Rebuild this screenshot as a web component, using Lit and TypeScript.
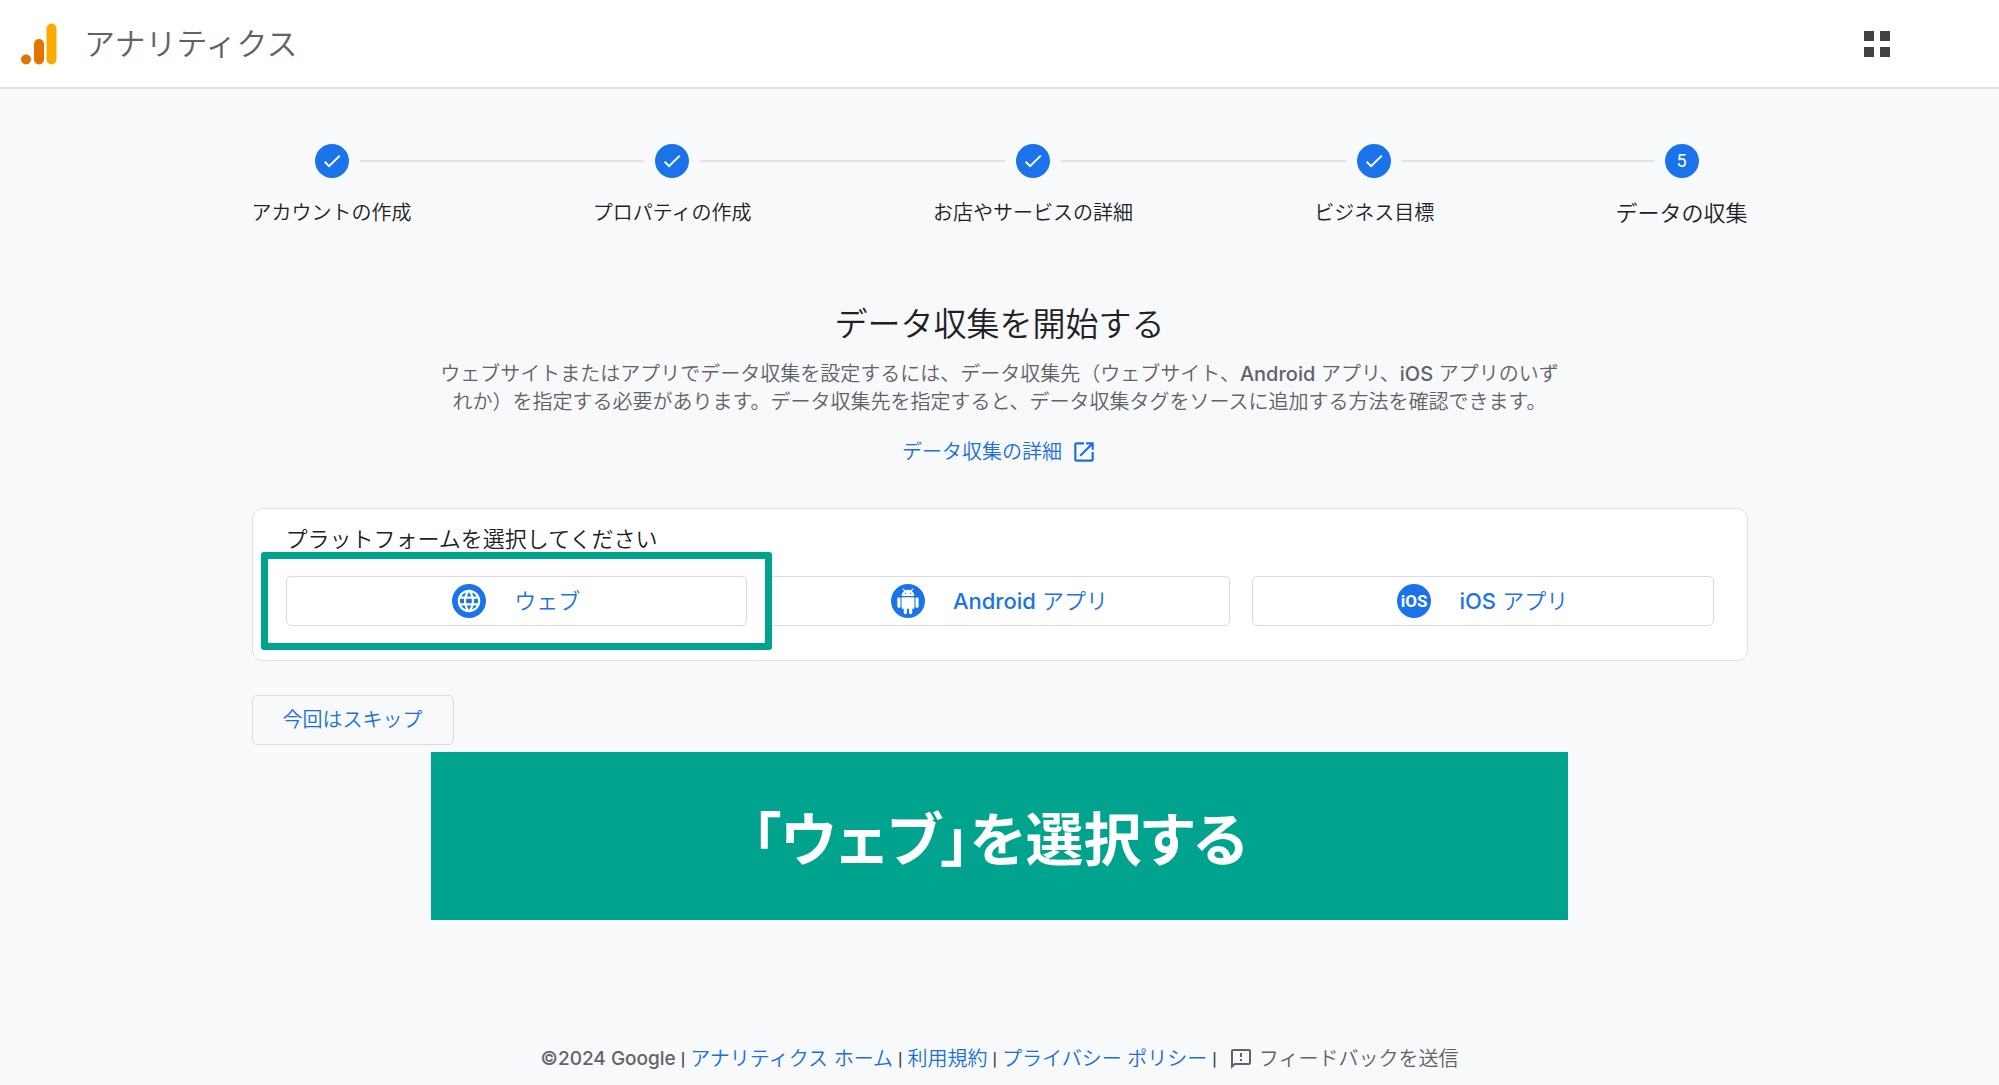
import { LitElement, html, css, svg } from "lit";
import { customElement, property } from "lit/decorators.js";
import { classMap } from "lit/directives/class-map.js";

const platformGlyphs = {
  web: svg`<g fill="#fff" transform="translate(3.5 3.5) scale(1.125)"><path d="M11.99 2C6.47 2 2 6.48 2 12s4.47 10 9.99 10C17.52 22 22 17.52 22 12S17.52 2 11.99 2zm6.93 6h-2.95c-.32-1.25-.78-2.45-1.38-3.56 1.84.63 3.37 1.91 4.33 3.56zM12 4.04c.83 1.2 1.48 2.53 1.91 3.96h-3.82c.43-1.43 1.08-2.76 1.91-3.96zM4.26 14C4.1 13.36 4 12.69 4 12s.1-1.36.26-2h3.38c-.08.66-.14 1.32-.14 2 0 .68.06 1.34.14 2H4.26zm.82 2h2.95c.32 1.25.78 2.45 1.38 3.56-1.84-.63-3.37-1.9-4.33-3.56zm2.95-8H5.08c.96-1.66 2.49-2.93 4.33-3.56C8.81 5.55 8.35 6.75 8.03 8zM12 19.96c-.83-1.2-1.48-2.53-1.91-3.96h3.82c-.43 1.43-1.08 2.76-1.91 3.96zM14.34 14H9.66c-.09-.66-.16-1.32-.16-2 0-.68.07-1.35.16-2h4.68c.09.65.16 1.32.16 2 0 .68-.07 1.34-.16 2zm.25 5.56c.6-1.11 1.06-2.31 1.38-3.56h2.95c-.96 1.65-2.49 2.93-4.33 3.56zM16.36 14c.08-.66.14-1.32.14-2 0-.68-.06-1.34-.14-2h3.38c.16.64.26 1.31.26 2s-.1 1.36-.26 2h-3.38z"/></g>`,
  android: svg`<g fill="#fff" transform="translate(4.2 4.6) scale(1.066)"><path d="M6 18c0 .55.45 1 1 1h1v3.5c0 .83.67 1.5 1.5 1.5s1.5-.67 1.5-1.5V19h2v3.5c0 .83.67 1.5 1.5 1.5s1.5-.67 1.5-1.5V19h1c.55 0 1-.45 1-1V8H6v10zM3.5 8C2.67 8 2 8.67 2 9.5v7c0 .83.67 1.5 1.5 1.5S5 17.33 5 16.5v-7C5 8.67 4.33 8 3.5 8zm17 0c-.83 0-1.5.67-1.5 1.5v7c0 .83.67 1.5 1.5 1.5s1.5-.67 1.5-1.5v-7c0-.83-.67-1.5-1.5-1.5zm-4.97-5.84l1.3-1.3c.2-.2.2-.51 0-.71-.2-.2-.51-.2-.71 0l-1.48 1.48C13.85 1.23 12.95 1 12 1c-.96 0-1.86.23-2.66.63L7.85.15c-.2-.2-.51-.2-.71 0-.2.2-.2.51 0 .71l1.31 1.31C6.97 3.26 6 5.01 6 7h12c0-1.99-.97-3.75-2.47-4.84zM10 5H9V4h1v1zm5 0h-1V4h1v1z"/></g>`,
  ios: svg`<text class="ios-mark" x="17" y="23" text-anchor="middle">iOS</text>`,
};

type Platform = keyof typeof platformGlyphs;

const baseStyles = css`
  * {
    box-sizing: border-box;
  }
  svg {
    display: block;
    flex: none;
  }
`;

@customElement("setup-stepper")
class SetupStepper extends LitElement {
  static styles = [
    baseStyles,
    css`
      :host {
        display: block;
      }
      .steps {
        display: flex;
        list-style: none;
        margin: 0;
        padding: 0;
      }
      .step {
        flex: none;
      }
      .head {
        display: flex;
        align-items: center;
        gap: 11px;
      }
      .line {
        flex: 1;
        height: 2px;
        background: #e0e2e6;
      }
      .line.blank {
        background: transparent;
      }
      .connector {
        margin-top: 16px;
      }
      .badge {
        display: grid;
        place-items: center;
        width: 34px;
        height: 34px;
        border-radius: 50%;
        background: #1a73e8;
        color: #fff;
        font-family: Roboto, sans-serif;
        font-size: 18px;
        font-weight: 400;
      }
      .label {
        margin-top: 20px;
        font-size: 20px;
        line-height: 30px;
        white-space: nowrap;
      }
      .label.current {
        font-size: 22px;
      }
    `,
  ];

  @property({ attribute: false }) labels: string[] = [];

  render() {
    const last = this.labels.length - 1;
    return html`<ol class="steps">
      ${this.labels.map(
        (label, i) => html`${i > 0
            ? html`<li class="line connector" role="presentation"></li>`
            : ""}
          <li class="step">
            <div class="head">
              <span class=${classMap({ line: true, blank: i === 0 })}></span>
              <span class="badge">
                ${i < last
                  ? html`<svg width="34" height="34" viewBox="0 0 34 34" aria-hidden="true">
                      <path d="M9.7 17.8l4.4 4.4L24.8 11.6" fill="none" stroke="#fff" stroke-width="2" />
                    </svg>`
                  : i + 1}
              </span>
              <span class=${classMap({ line: true, blank: i === last })}></span>
            </div>
            <div class=${classMap({ label: true, current: i === last })}>${label}</div>
          </li>`
      )}
    </ol>`;
  }
}

@customElement("platform-button")
class PlatformButton extends LitElement {
  static styles = [
    baseStyles,
    css`
      :host {
        display: block;
        position: relative;
      }
      .button {
        display: flex;
        align-items: center;
        justify-content: center;
        gap: 28px;
        width: 100%;
        height: 50px;
        padding: 0;
        border: 1px solid #dadce0;
        border-radius: 5px;
        background: #fff;
        color: #1a73e8;
        font: inherit;
        font-size: 22px;
        line-height: 30px;
      }
      .latin {
        font-weight: 500;
      }
      .ios-mark {
        fill: #fff;
        font: 700 17px "Liberation Sans Narrow", Roboto, sans-serif;
      }
      .marker {
        position: absolute;
        inset: -24px -25px;
        border: 7px solid #00a38d;
        border-radius: 3px;
        pointer-events: none;
      }
    `,
  ];

  @property() platform: Platform = "web";
  @property() latin = "";
  @property() label = "";
  @property({ type: Boolean }) marked = false;

  render() {
    return html`<button class="button" type="button">
        <svg width="34" height="34" viewBox="0 0 34 34" aria-hidden="true">
          <circle cx="17" cy="17" r="17" fill="#1a73e8" />
          ${platformGlyphs[this.platform]}
        </svg>
        <span>${this.latin ? html`<span class="latin">${this.latin}</span> ` : ""}${this.label}</span>
      </button>
      ${this.marked ? html`<div class="marker"></div>` : ""}`;
  }
}

@customElement("app-root")
class AppRoot extends LitElement {
  static styles = [
    baseStyles,
    css`
      :host {
        display: flex;
        flex-direction: column;
        min-height: 100vh;
        background: #f8f9fb;
        color: #202124;
        font-family: Inter, "Noto Sans CJK JP", sans-serif;
        font-size: 20px;
        line-height: 28px;
        font-weight: 350;
      }
      a {
        color: #1a6fe0;
        text-decoration: none;
      }
      .bar {
        display: flex;
        align-items: center;
        height: 89px;
        padding: 0 109px 0 21px;
        border-bottom: 2px solid #dfe1e5;
        background: #fff;
      }
      .product {
        margin-left: 26px;
        color: #5f6368;
        font-size: 31px;
        line-height: 40px;
      }
      .apps {
        margin-left: auto;
        padding: 0;
        border: 0;
        background: none;
      }
      .main {
        width: 100%;
        max-width: 1496px;
        margin: 0 auto;
        padding-top: 55px;
      }
      .title {
        margin: 72px 0 0;
        font-size: 33px;
        font-weight: 350;
        line-height: 48px;
        text-align: center;
      }
      .lead {
        max-width: 1136px;
        margin: 12px auto 0;
        color: #5f6368;
        text-align: center;
      }
      .latin {
        display: inline-block;
        font-weight: 500;
      }
      .more {
        display: flex;
        align-items: center;
        justify-content: center;
        gap: 9px;
        width: fit-content;
        margin: 22px auto 0;
      }
      .card {
        margin-top: 42px;
        padding: 15px 33px 34px;
        border: 1px solid #dfe1e5;
        border-radius: 11px;
        background: #fff;
      }
      .question {
        margin: 0;
        font-size: 22px;
        font-weight: 350;
        line-height: 30px;
      }
      .platforms {
        display: grid;
        grid-template-columns: repeat(3, 1fr);
        gap: 22px;
        margin-top: 22px;
      }
      .front {
        z-index: 1;
      }
      .skip {
        display: block;
        height: 50px;
        margin-top: 34px;
        padding: 0 30px;
        border: 1px solid #dadce0;
        border-radius: 5px;
        background: transparent;
        color: #1a6fe0;
        font: inherit;
      }
      .banner {
        display: grid;
        place-items: center;
        width: 76%;
        min-height: 168px;
        margin: 7px auto 0;
        background: #00a38d;
        color: #fff;
        font-family: "Noto Sans CJK JP", sans-serif;
        font-size: 58px;
        font-weight: 700;
        line-height: 84px;
        font-feature-settings: "palt";
      }
      .footer {
        display: flex;
        align-items: center;
        justify-content: center;
        gap: 5px;
        margin-top: auto;
        padding: 24px 0 12px;
        color: #5f6368;
      }
      .feedback {
        display: flex;
        align-items: center;
        gap: 6px;
        margin-left: 7px;
        color: #5f6368;
      }
      .sep {
        color: #3c4043;
        font-family: Roboto, sans-serif;
        font-size: 18px;
        font-weight: 500;
      }
      .copy {
        font-size: 19px;
        font-weight: 500;
      }
    `,
  ];

  render() {
    return html`
      <header class="bar">
        <svg width="37" height="42" viewBox="0 0 37 42" aria-hidden="true">
          <rect x="25.5" y="0.5" width="10" height="41" rx="5" fill="#f9ab00" />
          <rect x="13" y="16" width="10" height="25.5" rx="5" fill="#e37400" />
          <circle cx="5" cy="36.5" r="5" fill="#e37400" />
        </svg>
        <span class="product">アナリティクス</span>
        <button class="apps" type="button" aria-label="アプリ">
          <svg width="26" height="26" viewBox="0 0 26 26" fill="#3f4346">
            <path d="M0 0h10v10H0zM16 0h10v10H16zM0 16h10v10H0zM16 16h10v10H16z" />
          </svg>
        </button>
      </header>

      <main class="main">
        <setup-stepper
          .labels=${["アカウントの作成", "プロパティの作成", "お店やサービスの詳細", "ビジネス目標", "データの収集"]}
        ></setup-stepper>

        <h1 class="title">データ収集を開始する</h1>
        <p class="lead">ウェブサイトまたはアプリでデータ収集を設定するには、データ収集先（ウェブサイト、<span class="latin">Android</span> アプリ、<span class="latin">iOS</span> アプリのいずれか）を指定する必要があります。データ収集先を指定すると、データ収集タグをソースに追加する方法を確認できます。</p>
        <a class="more" href="#details">データ収集の詳細
          <svg width="26" height="26" viewBox="0 0 24 24" fill="currentColor" aria-hidden="true">
            <path d="M19 19H5V5h7V3H5c-1.11 0-2 .9-2 2v14c0 1.1.89 2 2 2h14c1.1 0 2-.9 2-2v-7h-2v7zM14 3v2h3.59l-9.83 9.83 1.41 1.41L19 6.41V10h2V3h-7z" />
          </svg>
        </a>

        <section class="card">
          <h2 class="question">プラットフォームを選択してください</h2>
          <div class="platforms">
            <platform-button class="front" platform="web" label="ウェブ" marked></platform-button>
            <platform-button platform="android" latin="Android" label="アプリ"></platform-button>
            <platform-button platform="ios" latin="iOS" label="アプリ"></platform-button>
          </div>
        </section>

        <button class="skip" type="button">今回はスキップ</button>
        <div class="banner">「ウェブ」を選択する</div>
      </main>

      <footer class="footer">
        <span class="copy">©2024 Google</span>
        <span class="sep">|</span>
        <a href="#home">アナリティクス ホーム</a>
        <span class="sep">|</span>
        <a href="#terms">利用規約</a>
        <span class="sep">|</span>
        <a href="#privacy">プライバシー ポリシー</a>
        <span class="sep">|</span>
        <a class="feedback" href="#feedback">
          <svg width="24" height="24" viewBox="0 0 24 24" fill="currentColor" aria-hidden="true">
            <path d="M20 2H4c-1.1 0-1.99.9-1.99 2L2 22l4-4h14c1.1 0 2-.9 2-2V4c0-1.1-.9-2-2-2zm0 14H5.17L4 17.17V4h16v12zM11 12h2v2h-2zm0-6h2v4h-2z" />
          </svg>
          フィードバックを送信
        </a>
      </footer>
    `;
  }
}
